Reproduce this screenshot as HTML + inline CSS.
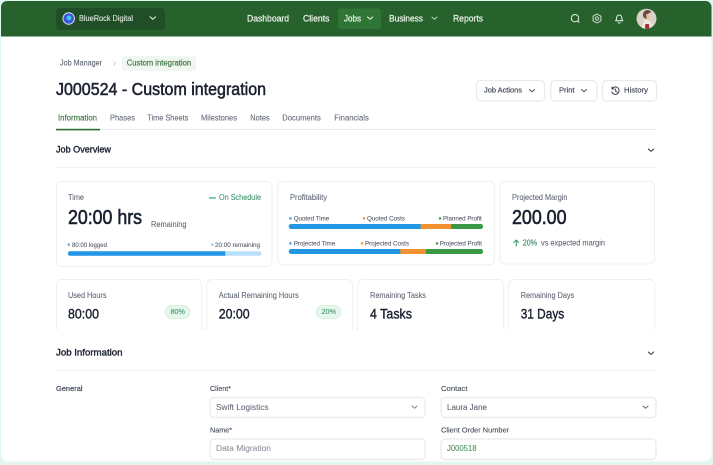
<!DOCTYPE html>
<html lang="en">
<head>
<meta charset="utf-8">
<title>J000524 - Custom integration</title>
<style>
html,body{margin:0;padding:0;width:713px;height:465px;overflow:hidden;background:#e2f5ee}
svg{display:block;filter:blur(.3px)}
text{font-family:"Liberation Sans",sans-serif;white-space:pre}
.nav{font-size:9px;fill:#eef5ee;stroke:#eef5ee;stroke-width:.22}
.lb{font-size:8px;fill:#5b6270;stroke:#5b6270;stroke-width:.06}
.lg{font-size:6.8px;fill:#4b5260;stroke:#4b5260;stroke-width:.06}
.dk{fill:#1b2130;stroke:#1b2130;stroke-width:.55}
.val{font-size:13.500px;stroke-width:.38}
.h{font-size:9.500px;fill:#1b2130;stroke:#1b2130;stroke-width:.38}
.tab{font-size:8px;fill:#626977;stroke:#626977;stroke-width:.08}
.btn{font-size:7.600px;fill:#3a4150;stroke:#3a4150;stroke-width:.15}
.card{fill:#fff;stroke:#eef0f2;stroke-width:1}
.fld{fill:#fff;stroke:#e8eaee;stroke-width:1.2}
.chev{fill:none;stroke:#4b5260;stroke-width:1;stroke-linecap:round;stroke-linejoin:round}
.ic{fill:none;stroke:#eef5ee;stroke-width:1;stroke-linecap:round;stroke-linejoin:round}
</style>
</head>
<body>
<svg width="713" height="465" viewBox="0 0 713 465" xmlns="http://www.w3.org/2000/svg">
<rect width="713" height="465" fill="#e2f5ee"/>
<rect x="1" y="1" width="710.500" height="460.500" rx="7" fill="#fff"/>

<!-- header -->
<path d="M1 36.500V7a6 6 0 0 1 6-6H705.500a6 6 0 0 1 6 6V36.500Z" fill="#27612c"/>
<rect x="56" y="8" width="109" height="22" rx="4" fill="#204f27"/>
<circle cx="68.700" cy="18.500" r="6.200" fill="#dfe4f7"/>
<circle cx="68.700" cy="18.500" r="5.300" fill="#3d55d8"/>
<circle cx="69" cy="18" r="2.400" fill="#38c9e6"/>
<text x="79" y="21" class="nav" style="font-size:8px;stroke-width:.1;fill:#d9e4da" textLength="54" lengthAdjust="spacingAndGlyphs">BlueRock Digital</text>
<path d="M150 16.800l2.800 2.500 2.800-2.500" class="ic"/>

<rect x="338" y="8.500" width="43" height="20.500" rx="3" fill="#2f7535"/>
<text x="247" y="21.300" class="nav" textLength="42" lengthAdjust="spacingAndGlyphs">Dashboard</text>
<text x="303" y="21.300" class="nav" textLength="26.500" lengthAdjust="spacingAndGlyphs">Clients</text>
<text x="344" y="21.300" class="nav" textLength="17" lengthAdjust="spacingAndGlyphs">Jobs</text>
<path d="M367.500 17l2.600 2.300 2.600-2.300" class="ic"/>
<text x="389" y="21.300" class="nav" textLength="34" lengthAdjust="spacingAndGlyphs">Business</text>
<path d="M432 17l2.500 2.200 2.500-2.200" class="ic" style="stroke:#b9d2bb"/>
<text x="453" y="21.300" class="nav" textLength="30" lengthAdjust="spacingAndGlyphs">Reports</text>

<circle cx="575" cy="18.200" r="3.700" class="ic"/><path d="M577.800 21l1.300 1.300" class="ic"/>
<circle cx="597" cy="18.500" r="1.600" class="ic" style="stroke:#cfe0d0"/>
<path d="M597 14l3.900 2.200v4.600L597 23l-3.900-2.200v-4.600Z" class="ic" style="stroke:#cfe0d0"/>
<path d="M615.600 20.800h7.200c-.9-1-1.100-2-1.100-3.300a2.500 2.500 0 0 0-5 0c0 1.300-.2 2.300-1.100 3.300Z" class="ic"/><path d="M618.200 22.900h2" class="ic"/>
<circle cx="646.500" cy="18.700" r="10" fill="#d9d2c8"/>
<path d="M643 15c0-3 2-5 4.500-5s3.500 1.600 3.500 3c-1.300-.8-2.200-.5-2.600 1 .3 2.500-.2 4.200-1.400 4.800-2.200 0-4-1.500-4-3.800Z" fill="#6a4a3e"/>
<path d="M646 14.500l3-1 1 3-1.200 3h-2Z" fill="#e6c0a8"/>
<path d="M642 28c0-4 1-7 3-8l4 0c2 1 3.500 4 3.500 6a10 10 0 0 1-10.500 2Z" fill="#ece6dd"/>
<path d="M645 28.500l.4-4.500h3.400l.6 4.200a10 10 0 0 1-4.400.3Z" fill="#a92a2a"/>

<!-- breadcrumb -->
<text x="60" y="65.300" class="lb" style="fill:#555c69" textLength="42" lengthAdjust="spacingAndGlyphs">Job Manager</text>
<path d="M113.500 61.500l2 2-2 2" fill="none" stroke="#c9cdd3" stroke-width=".9"/>
<rect x="122" y="56" width="74" height="15" rx="3" fill="#f0f7f0"/>
<text x="126.700" y="65.300" class="lb" style="fill:#3c7341;stroke:#3c7341;stroke-width:.15" textLength="64.500" lengthAdjust="spacingAndGlyphs">Custom integration</text>

<!-- title -->
<text x="56" y="95" class="dk" style="font-size:17.500px" textLength="210" lengthAdjust="spacingAndGlyphs">J000524 - Custom integration</text>

<!-- buttons -->
<rect x="476.500" y="80.500" width="68" height="20.500" rx="4" class="fld"/>
<text x="484" y="92.700" class="btn" textLength="38" lengthAdjust="spacingAndGlyphs">Job Actions</text>
<path d="M529.500 89.500l2.500 2.300 2.500-2.300" class="chev"/>
<rect x="550.800" y="80.500" width="46" height="20.500" rx="4" class="fld"/>
<text x="559" y="92.700" class="btn" textLength="15.500" lengthAdjust="spacingAndGlyphs">Print</text>
<path d="M581.500 89.500l2.500 2.300 2.500-2.300" class="chev"/>
<rect x="602.500" y="80.500" width="54" height="20.500" rx="4" class="fld"/>
<path d="M612.200 88.700a3.700 3.700 0 1 1-.3 3.200M612 87v2h2M615.600 89v2.200l1.400.8" class="chev" style="stroke:#3a4150"/>
<text x="624" y="92.700" class="btn" textLength="24" lengthAdjust="spacingAndGlyphs">History</text>

<!-- tabs -->
<text x="58" y="120.700" class="tab" style="fill:#3c7341;stroke:#3c7341;stroke-width:.15" textLength="39" lengthAdjust="spacingAndGlyphs">Information</text>
<text x="110" y="120.700" class="tab" textLength="25" lengthAdjust="spacingAndGlyphs">Phases</text>
<text x="147.300" y="120.700" class="tab" textLength="41" lengthAdjust="spacingAndGlyphs">Time Sheets</text>
<text x="201" y="120.700" class="tab" textLength="36" lengthAdjust="spacingAndGlyphs">Milestones</text>
<text x="250.300" y="120.700" class="tab" textLength="19.500" lengthAdjust="spacingAndGlyphs">Notes</text>
<text x="282.300" y="120.700" class="tab" textLength="38.500" lengthAdjust="spacingAndGlyphs">Documents</text>
<text x="334.300" y="120.700" class="tab" textLength="34.500" lengthAdjust="spacingAndGlyphs">Financials</text>
<rect x="56" y="129" width="600" height="1" fill="#e9ebee"/>
<rect x="56" y="128.800" width="44" height="1.600" fill="#2f6b34"/>

<!-- job overview -->
<text x="56" y="152.500" class="h" textLength="55" lengthAdjust="spacingAndGlyphs">Job Overview</text>
<path d="M648.300 149l2.700 2.400 2.700-2.400" class="chev" style="stroke:#2a3040"/>
<rect x="56" y="167" width="600" height="1" fill="#f0f1f3"/>

<!-- top cards -->
<rect x="56.500" y="181.500" width="215.500" height="85" rx="5" class="card"/>
<rect x="277.800" y="181.500" width="216.800" height="83.500" rx="5" class="card"/>
<rect x="499.800" y="181.500" width="154.700" height="82.500" rx="5" class="card"/>

<!-- time card -->
<text x="68" y="200" class="lb" textLength="16" lengthAdjust="spacingAndGlyphs">Time</text>
<rect x="209" y="197.300" width="7" height="1.300" fill="#3fae7e"/>
<text x="219" y="200" class="lb" style="fill:#3c8f69;stroke:#3c8f69" textLength="42" lengthAdjust="spacingAndGlyphs">On Schedule</text>
<text x="68" y="224" class="dk" style="font-size:20px;stroke-width:.6" textLength="74" lengthAdjust="spacingAndGlyphs">20:00 hrs</text>
<text x="151" y="227" class="lb" textLength="35.500" lengthAdjust="spacingAndGlyphs">Remaining</text>
<rect x="67.700" y="243.500" width="2.200" height="2.200" fill="#4aa8ea"/>
<text x="72" y="247" class="lg" textLength="35" lengthAdjust="spacingAndGlyphs">80:00 logged</text>
<rect x="211.300" y="243.500" width="2.200" height="2.200" fill="#7cc7f5"/>
<text x="215" y="247" class="lg" textLength="45" lengthAdjust="spacingAndGlyphs">20:00 remaining</text>
<rect x="68" y="251.300" width="193.300" height="4.400" rx="2" fill="#b7e0fb"/>
<path d="M70 251.300H225.300V255.700H70a2.200 2.200 0 0 1 0-4.400Z" fill="#2496e6"/>

<!-- profitability -->
<text x="290" y="200" class="lb" textLength="37" lengthAdjust="spacingAndGlyphs">Profitability</text>
<rect x="289.300" y="217.300" width="2.200" height="2.200" fill="#2f9be6"/>
<text x="293.700" y="220.700" class="lg" textLength="35.500" lengthAdjust="spacingAndGlyphs">Quoted Time</text>
<rect x="363" y="217.300" width="2.200" height="2.200" fill="#f19130"/>
<text x="367" y="220.700" class="lg" textLength="38" lengthAdjust="spacingAndGlyphs">Quoted Costs</text>
<rect x="439" y="217.300" width="2.200" height="2.200" fill="#3c9a45"/>
<text x="443" y="220.700" class="lg" textLength="38.700" lengthAdjust="spacingAndGlyphs">Planned Profit</text>
<rect x="289" y="224" width="194" height="5" rx="2.200" fill="#3c9a45"/>
<path d="M291.200 224H420.700V229H291.200a2.500 2.500 0 0 1 0-5Z" fill="#2496e6"/>
<rect x="420.700" y="224" width="30.400" height="5" fill="#f19130"/>
<rect x="289.300" y="242.300" width="2.200" height="2.200" fill="#2f9be6"/>
<text x="293.700" y="245.700" class="lg" textLength="41.500" lengthAdjust="spacingAndGlyphs">Projected Time</text>
<rect x="361" y="242.300" width="2.200" height="2.200" fill="#f19130"/>
<text x="365" y="245.700" class="lg" textLength="44" lengthAdjust="spacingAndGlyphs">Projected Costs</text>
<rect x="436" y="242.300" width="2.200" height="2.200" fill="#3c9a45"/>
<text x="439.700" y="245.700" class="lg" textLength="42.300" lengthAdjust="spacingAndGlyphs">Projected Profit</text>
<rect x="289" y="249" width="194" height="5" rx="2.200" fill="#3c9a45"/>
<path d="M291.200 249H400.300V254H291.200a2.500 2.500 0 0 1 0-5Z" fill="#2496e6"/>
<rect x="400.300" y="249" width="25.700" height="5" fill="#f19130"/>

<!-- margin -->
<text x="512" y="200" class="lb" textLength="55.500" lengthAdjust="spacingAndGlyphs">Projected Margin</text>
<text x="512" y="224" class="dk" style="font-size:20px;stroke-width:.6" textLength="54.500" lengthAdjust="spacingAndGlyphs">200.00</text>
<path d="M516.300 246.500v-6.300M513.600 242.800l2.700-2.700 2.700 2.700" fill="none" stroke="#2f9a63" stroke-width="1"/>
<text x="522.700" y="245.500" class="lb" style="fill:#3c8f69;stroke:#3c8f69;stroke-width:.15" textLength="14.500" lengthAdjust="spacingAndGlyphs">20%</text>
<text x="541" y="245.500" class="lb" textLength="64" lengthAdjust="spacingAndGlyphs">vs expected margin</text>

<!-- lower cards (clipped) -->
<rect x="56.500" y="279.500" width="145.200" height="70" rx="5" class="card"/>
<rect x="206.800" y="279.500" width="145.700" height="70" rx="5" class="card"/>
<rect x="357.700" y="279.500" width="146" height="70" rx="5" class="card"/>
<rect x="508.700" y="279.500" width="146" height="70" rx="5" class="card"/>
<rect x="50" y="330" width="612" height="24" fill="#fff"/>

<text x="68" y="298" class="lb" textLength="38.500" lengthAdjust="spacingAndGlyphs">Used Hours</text>
<text x="68" y="318.500" class="dk val" textLength="31" lengthAdjust="spacingAndGlyphs">80:00</text>
<rect x="165.300" y="305.500" width="24.500" height="13" rx="6.500" fill="#e4f7ea" stroke="#cdeeda" stroke-width=".8"/>
<text x="170.500" y="314" class="lg" style="font-size:7.500px;fill:#3c8f69;stroke:#3c8f69" textLength="14.500" lengthAdjust="spacingAndGlyphs">80%</text>

<text x="218.700" y="298" class="lb" textLength="80" lengthAdjust="spacingAndGlyphs">Actual Remaining Hours</text>
<text x="218.700" y="318.500" class="dk val" textLength="31" lengthAdjust="spacingAndGlyphs">20:00</text>
<rect x="316.300" y="305.500" width="24.500" height="13" rx="6.500" fill="#e4f7ea" stroke="#cdeeda" stroke-width=".8"/>
<text x="321.500" y="314" class="lg" style="font-size:7.500px;fill:#3c8f69;stroke:#3c8f69" textLength="14.500" lengthAdjust="spacingAndGlyphs">20%</text>

<text x="370" y="298" class="lb" textLength="56" lengthAdjust="spacingAndGlyphs">Remaining Tasks</text>
<text x="370" y="318.500" class="dk val" textLength="42" lengthAdjust="spacingAndGlyphs">4 Tasks</text>
<text x="520.700" y="298" class="lb" textLength="53.500" lengthAdjust="spacingAndGlyphs">Remaining Days</text>
<text x="520.700" y="318.500" class="dk val" textLength="43.500" lengthAdjust="spacingAndGlyphs">31 Days</text>

<!-- job information -->
<text x="56" y="355.700" class="h" textLength="66.500" lengthAdjust="spacingAndGlyphs">Job Information</text>
<path d="M648.300 352l2.700 2.400 2.700-2.400" class="chev" style="stroke:#2a3040"/>
<rect x="56" y="370" width="600" height="1" fill="#f0f1f3"/>

<text x="56" y="391" class="lb" style="font-size:7.600px;fill:#3a4150;stroke:#3a4150;stroke-width:.15" textLength="26.500" lengthAdjust="spacingAndGlyphs">General</text>
<text x="210" y="391" class="lb" style="font-size:7.600px;fill:#3a4150;stroke:#3a4150" textLength="21" lengthAdjust="spacingAndGlyphs">Client*</text>
<text x="441" y="391" class="lb" style="font-size:7.600px;fill:#3a4150;stroke:#3a4150" textLength="26.500" lengthAdjust="spacingAndGlyphs">Contact</text>

<rect x="210" y="397.500" width="215" height="20" rx="4" class="fld"/>
<text x="216" y="410" class="lb" style="font-size:8.500px;fill:#636a77;stroke:#636a77" textLength="52.500" lengthAdjust="spacingAndGlyphs">Swift Logistics</text>
<path d="M412 406l2.500 2.200 2.500-2.200" class="chev" style="stroke:#7a808c"/>
<rect x="441" y="397.500" width="215" height="20" rx="4" class="fld"/>
<text x="447" y="410" class="lb" style="font-size:8.500px;fill:#555c69;stroke:#555c69" textLength="40" lengthAdjust="spacingAndGlyphs">Laura Jane</text>
<path d="M643 406l2.500 2.200 2.500-2.200" class="chev" style="stroke:#5b6270"/>

<text x="210" y="432.500" class="lb" style="font-size:7.600px;fill:#3a4150;stroke:#3a4150" textLength="22" lengthAdjust="spacingAndGlyphs">Name*</text>
<text x="441" y="432.500" class="lb" style="font-size:7.600px;fill:#3a4150;stroke:#3a4150" textLength="68" lengthAdjust="spacingAndGlyphs">Client Order Number</text>

<rect x="210" y="439" width="215" height="20.500" rx="4" class="fld"/>
<text x="216" y="451" class="lb" style="font-size:8.500px;fill:#8b909a;stroke:#8b909a" textLength="55" lengthAdjust="spacingAndGlyphs">Data Migration</text>
<rect x="441" y="439" width="215" height="20.500" rx="4" class="fld"/>
<text x="447" y="451" class="lb" style="font-size:8.500px;fill:#4a8a52;stroke:#4a8a52" textLength="29.500" lengthAdjust="spacingAndGlyphs">J000518</text>
</svg>
</body>
</html>
